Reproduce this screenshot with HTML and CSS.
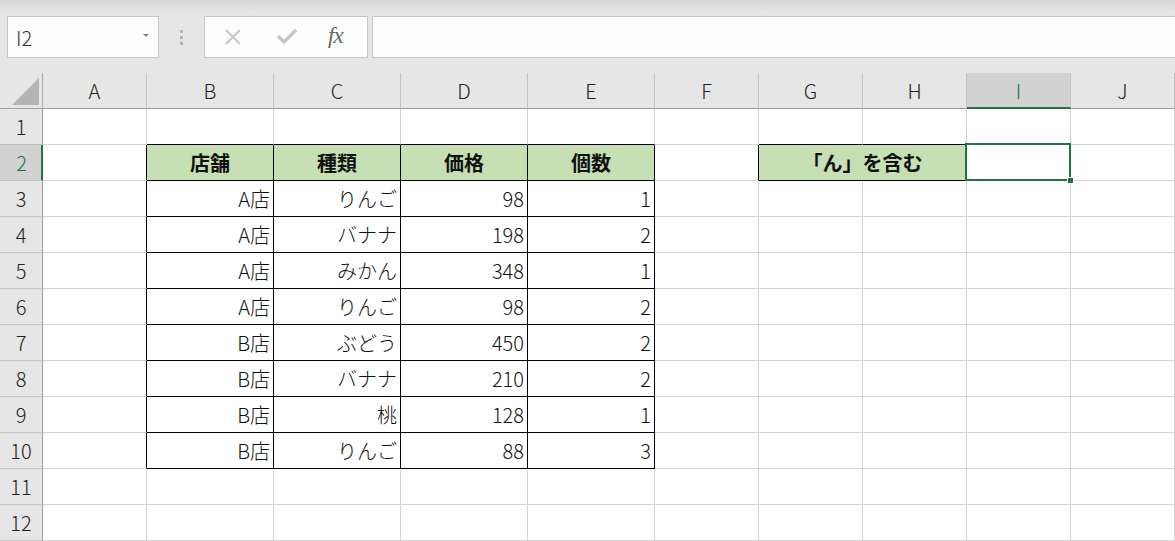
FILE: index.html
```html
<!DOCTYPE html>
<html lang="ja">
<head>
  <meta charset="UTF-8">
  <title>Book1 - Excel</title>
  <link rel="stylesheet" href="styles.css">
</head>
<body>

  <div class="toolbar">
    <div class="name-box">
      <span>I2</span>
      <span class="drop"></span>
    </div>
    <div class="grip"><i></i><i></i><i></i></div>
    <div class="fx-buttons">
      <svg class="btn" width="20" height="20" viewBox="0 0 20 20">
        <path d="M3 3 L17 17 M17 3 L3 17" stroke="#c6c6c6" stroke-width="1.8" fill="none"/>
      </svg>
      <svg class="btn" width="22" height="20" viewBox="0 0 22 20">
        <path d="M2 9 L8 15 L20 3" stroke="#c6c6c6" stroke-width="3.2" fill="none"/>
      </svg>
      <span class="fx">fx</span>
    </div>
    <div class="formula"></div>
  </div>

  <div class="sheet">
    <!-- column headers -->
    <div class="corner"><span class="tri"></span></div>
    <div class="colhead">A</div>
    <div class="colhead">B</div>
    <div class="colhead">C</div>
    <div class="colhead">D</div>
    <div class="colhead">E</div>
    <div class="colhead">F</div>
    <div class="colhead">G</div>
    <div class="colhead">H</div>
    <div class="colhead active">I</div>
    <div class="colhead">J</div>

    <!-- row 1 -->
    <div class="rowhead">1</div>
    <div class="cell"></div>
    <div class="cell b-bottom"></div>
    <div class="cell b-bottom"></div>
    <div class="cell b-bottom"></div>
    <div class="cell b-bottom"></div>
    <div class="cell"></div>
    <div class="cell b-bottom"></div>
    <div class="cell b-bottom"></div>
    <div class="cell"></div>
    <div class="cell"></div>

    <!-- row 2 -->
    <div class="rowhead active">2</div>
    <div class="cell b-right"></div>
    <div class="cell head t">店舗</div>
    <div class="cell head t">種類</div>
    <div class="cell head t">価格</div>
    <div class="cell head t">個数</div>
    <div class="cell b-right"></div>
    <div class="cell head t merged">「ん」を含む</div>
    <div class="cell selected"><span class="handle"></span></div>
    <div class="cell"></div>

    <!-- row 3 -->
    <div class="rowhead">3</div>
    <div class="cell b-right"></div>
    <div class="cell t">A店</div>
    <div class="cell t">りんご</div>
    <div class="cell t">98</div>
    <div class="cell t">1</div>
    <div class="cell"></div>
    <div class="cell"></div>
    <div class="cell"></div>
    <div class="cell"></div>
    <div class="cell"></div>

    <!-- row 4 -->
    <div class="rowhead">4</div>
    <div class="cell b-right"></div>
    <div class="cell t">A店</div>
    <div class="cell t">バナナ</div>
    <div class="cell t">198</div>
    <div class="cell t">2</div>
    <div class="cell"></div>
    <div class="cell"></div>
    <div class="cell"></div>
    <div class="cell"></div>
    <div class="cell"></div>

    <!-- row 5 -->
    <div class="rowhead">5</div>
    <div class="cell b-right"></div>
    <div class="cell t">A店</div>
    <div class="cell t">みかん</div>
    <div class="cell t">348</div>
    <div class="cell t">1</div>
    <div class="cell"></div>
    <div class="cell"></div>
    <div class="cell"></div>
    <div class="cell"></div>
    <div class="cell"></div>

    <!-- row 6 -->
    <div class="rowhead">6</div>
    <div class="cell b-right"></div>
    <div class="cell t">A店</div>
    <div class="cell t">りんご</div>
    <div class="cell t">98</div>
    <div class="cell t">2</div>
    <div class="cell"></div>
    <div class="cell"></div>
    <div class="cell"></div>
    <div class="cell"></div>
    <div class="cell"></div>

    <!-- row 7 -->
    <div class="rowhead">7</div>
    <div class="cell b-right"></div>
    <div class="cell t">B店</div>
    <div class="cell t">ぶどう</div>
    <div class="cell t">450</div>
    <div class="cell t">2</div>
    <div class="cell"></div>
    <div class="cell"></div>
    <div class="cell"></div>
    <div class="cell"></div>
    <div class="cell"></div>

    <!-- row 8 -->
    <div class="rowhead">8</div>
    <div class="cell b-right"></div>
    <div class="cell t">B店</div>
    <div class="cell t">バナナ</div>
    <div class="cell t">210</div>
    <div class="cell t">2</div>
    <div class="cell"></div>
    <div class="cell"></div>
    <div class="cell"></div>
    <div class="cell"></div>
    <div class="cell"></div>

    <!-- row 9 -->
    <div class="rowhead">9</div>
    <div class="cell b-right"></div>
    <div class="cell t">B店</div>
    <div class="cell t">桃</div>
    <div class="cell t">128</div>
    <div class="cell t">1</div>
    <div class="cell"></div>
    <div class="cell"></div>
    <div class="cell"></div>
    <div class="cell"></div>
    <div class="cell"></div>

    <!-- row 10 -->
    <div class="rowhead">10</div>
    <div class="cell b-right"></div>
    <div class="cell t">B店</div>
    <div class="cell t">りんご</div>
    <div class="cell t">88</div>
    <div class="cell t">3</div>
    <div class="cell"></div>
    <div class="cell"></div>
    <div class="cell"></div>
    <div class="cell"></div>
    <div class="cell"></div>

    <!-- row 11 -->
    <div class="rowhead">11</div>
    <div class="cell"></div>
    <div class="cell"></div>
    <div class="cell"></div>
    <div class="cell"></div>
    <div class="cell"></div>
    <div class="cell"></div>
    <div class="cell"></div>
    <div class="cell"></div>
    <div class="cell"></div>
    <div class="cell"></div>

    <!-- row 12 -->
    <div class="rowhead">12</div>
    <div class="cell"></div>
    <div class="cell"></div>
    <div class="cell"></div>
    <div class="cell"></div>
    <div class="cell"></div>
    <div class="cell"></div>
    <div class="cell"></div>
    <div class="cell"></div>
    <div class="cell"></div>
    <div class="cell"></div>
  </div>

</body>
</html>
```

FILE: styles.css
```css
* {
  box-sizing: border-box;
}

body {
  margin: 0;
  background: #e6e6e6;
  font-family: "Noto Sans CJK JP", "Noto Sans", sans-serif;
  font-weight: 300;
  color: #222;
  overflow: hidden;
}

/* formula bar */
.toolbar {
  height: 73px;
  padding-top: 16px;
  padding-left: 7px;
  display: flex;
  align-items: flex-start;
  background: linear-gradient(#d6d6d6, #e6e6e6 12px);
}

.name-box {
  width: 152px;
  height: 42px;
  background: #fdfdfd;
  border: 1px solid #c6c6c6;
  display: flex;
  align-items: center;
  justify-content: space-between;
  padding: 0 9px 0 8px;
  font-size: 20px;
  color: #333;
}

.name-box .drop {
  width: 0;
  height: 0;
  border-left: 3px solid transparent;
  border-right: 3px solid transparent;
  border-top: 3px solid #808080;
  margin-top: -4px;
}

.grip {
  width: 45px;
  height: 42px;
  display: flex;
  flex-direction: column;
  align-items: center;
  justify-content: center;
  gap: 3px;
}

.grip i {
  width: 3px;
  height: 3px;
  background: #b3b3b3;
}

.fx-buttons {
  width: 164px;
  height: 42px;
  background: #fdfdfd;
  border: 1px solid #c6c6c6;
  display: flex;
  align-items: center;
  padding-left: 18px;
  gap: 33px;
}

.fx {
  font-family: "Liberation Serif", serif;
  font-style: italic;
  font-weight: normal;
  font-size: 23px;
  color: #5d6b5d;
  margin-left: -3px;
  margin-top: -3px;
  letter-spacing: -1px;
}

.formula {
  flex: 1;
  height: 42px;
  margin-left: 4px;
  margin-right: -4px;
  background: #fdfdfd;
  border: 1px solid #c6c6c6;
}

/* grid */
.sheet {
  display: grid;
  grid-template-columns: 43px 104px 127px 127px 127px 127px 104px 104px 104px 104px 1fr;
  grid-auto-rows: 36px;
  background: #fff;
}

.corner {
  position: relative;
  background: #e6e6e6;
  border-right: 1px solid #ababab;
  border-bottom: 1px solid #9e9e9e;
}

.corner .tri {
  position: absolute;
  right: 3px;
  bottom: 3px;
  width: 0;
  height: 0;
  border-left: 27px solid transparent;
  border-bottom: 27px solid #b4b4b4;
}

.colhead {
  background: #e6e6e6;
  border-right: 1px solid #c4c4c4;
  border-bottom: 1px solid #9e9e9e;
  display: flex;
  align-items: center;
  justify-content: center;
  font-size: 20px;
  line-height: 20px;
  padding-top: 1px;
}

.colhead.active {
  background: #d2d2d2;
  border-bottom: 2px solid #217346;
  color: #217346;
}

.rowhead {
  background: #e6e6e6;
  border-right: 1px solid #9e9e9e;
  border-bottom: 1px solid #c4c4c4;
  display: flex;
  align-items: center;
  justify-content: center;
  font-size: 20px;
  line-height: 20px;
}

.rowhead.active {
  background: #d2d2d2;
  border-right: 2px solid #217346;
  color: #217346;
  padding-left: 2px;
}

.cell {
  border-right: 1px solid #d4d4d4;
  border-bottom: 1px solid #d4d4d4;
}

.cell.t {
  display: flex;
  align-items: center;
  justify-content: flex-end;
  padding-right: 3px;
  font-size: 20px;
  line-height: 20px;
  color: #111;
  border-right-color: #000;
  border-bottom-color: #000;
}

.cell.head {
  justify-content: center;
  padding-right: 0;
  background: #c6e0b4;
  font-weight: bold;
}

.cell.merged {
  grid-column: span 2;
}

.b-right {
  border-right-color: #000;
}

.b-bottom {
  border-bottom-color: #000;
}

.selected {
  position: relative;
}

.selected::after {
  content: "";
  position: absolute;
  left: -2px;
  top: -2px;
  right: -1px;
  bottom: -1px;
  border: 2px solid #217346;
}

.selected .handle {
  position: absolute;
  right: -4px;
  bottom: -4px;
  width: 7px;
  height: 7px;
  background: #217346;
  border: 1px solid #fff;
  z-index: 1;
}
```
